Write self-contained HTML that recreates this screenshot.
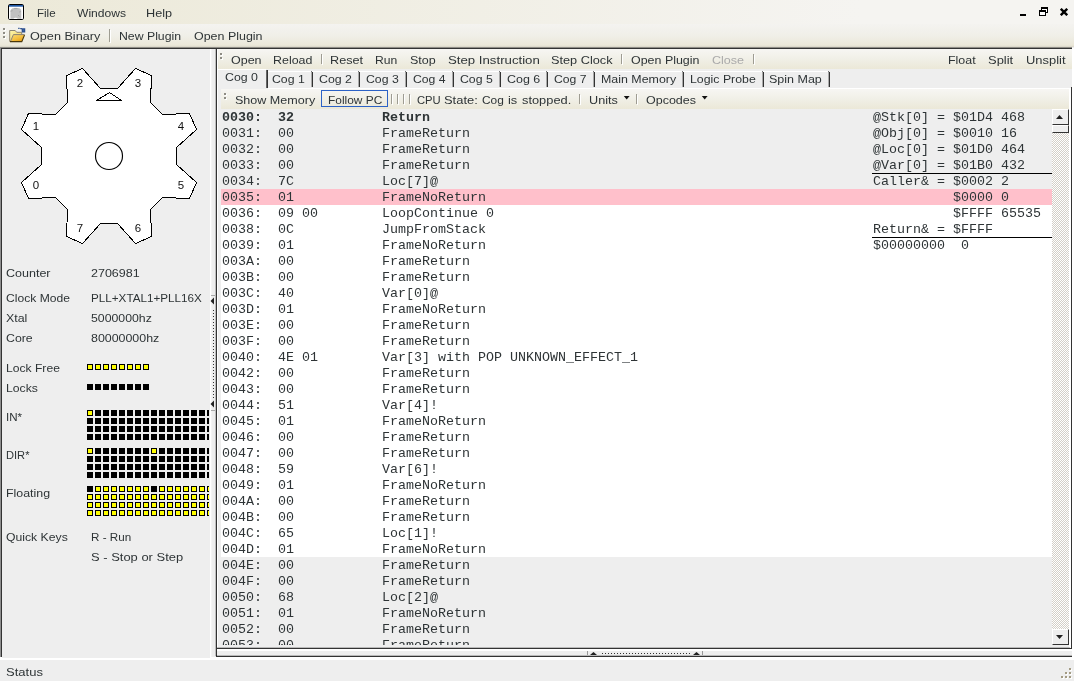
<!DOCTYPE html>
<html><head><meta charset="utf-8"><title>GEAR</title>
<style>
html,body{margin:0;padding:0}
body{width:1074px;height:681px;overflow:hidden;position:relative;background:#eeeeee;font-family:"Liberation Sans",sans-serif;font-size:12px;line-height:16px;color:#2e3436}
div,span,i,b{position:absolute;display:block}
.t{white-space:pre;transform-origin:0 0;font:11.5px/16px "Liberation Sans",sans-serif}
.g{width:20px;text-align:center;transform-origin:50% 50%;color:#111}
#menubar{left:0;top:0;width:1074px;height:24px;background:linear-gradient(90deg,#ece9d8 0,#f5f4f1 860px,#f5f4f1)}
#toolbar{left:0;top:24px;width:1074px;height:23px;background:linear-gradient(#f4f3f0,#f0efe8 50%,#ebe8d9 92%,#d9d6c8)}
.hl{height:1px}.vl{width:1px}
.tb{background:linear-gradient(#f7f6f3,#f1f0e8 45%,#ebe8d8)}
.sep{width:1px;background:#9e9c92;box-shadow:1px 1px 0 #fff}
.grip{width:2px;height:2px;background:#8e8c84;box-shadow:1px 1px 0 #fff}
.lk,.ly{width:6px;height:6px;background:#000;box-sizing:border-box}
.ly{border:1px solid #000;background:#ffff00}
#code{left:221px;top:109px;width:831px;height:536px;overflow:hidden;background:#fff}
.bg{left:0;width:831px}
pre{position:absolute;margin:0;white-space:pre;font:13.333px/16px "Liberation Mono",monospace;color:#2e3436;will-change:transform}
pre b{position:static;display:inline;font-weight:bold}
.ul{left:651px;width:180px;height:1px;background:#000}
.tabsep{width:2px;margin-left:-1px;background:linear-gradient(90deg,#aaa 0 50%,#333 50%);top:72px;height:15px}
.tabsep::before{content:"";position:absolute;left:0;top:-1px;width:1px;height:1px;background:#777}
</style></head><body>
<div id="menubar"></div>
<div id="toolbar"></div>
<!-- app icon -->
<svg style="position:absolute;left:7px;top:3px" width="18" height="18" viewBox="0 0 18 18">
<rect x="0.5" y="0.5" width="17" height="17" rx="2.5" fill="#f6f4ea"/>
<rect x="1.5" y="1.5" width="15" height="15" rx="1.2" fill="#fff" stroke="#000" stroke-width="1"/>
<rect x="2" y="2" width="14" height="1.7" fill="#2058a4"/>
<path d="M3.4 15.8 V8.6 C3.2 6.6 4.6 5 7.2 4.9 H11 C13.4 5 14.5 6.6 14.3 8.6 V15.8 H10.6 C10 14.4 7.2 14.4 6.6 15.8 Z" fill="#c1c1c1"/>
<path d="M3.6 8.2 L5.6 7.7 M12.2 9 L13.8 8.6 M11 12.2 L12.6 13.4 M7.2 5.4 H10.4" stroke="#a2a2a2" stroke-width="0.9" fill="none"/>
</svg>
<!-- window buttons -->
<div style="left:1020px;top:14px;width:6px;height:2px;background:#000"></div>
<svg style="position:absolute;left:1039px;top:7px" width="10" height="10" viewBox="0 0 10 10" shape-rendering="crispEdges">
<rect x="2.5" y="0.5" width="6" height="5" fill="#fff" stroke="#000"/><rect x="2" y="0" width="7" height="2" fill="#000"/>
<rect x="0.5" y="3.5" width="6" height="5" fill="#fff" stroke="#000"/><rect x="0" y="3" width="7" height="2" fill="#000"/>
</svg>
<svg style="position:absolute;left:1060px;top:8px" width="8" height="8" viewBox="0 0 8 8">
<path d="M0.8 0.8 L7.2 7.2 M7.2 0.8 L0.8 7.2" stroke="#000" stroke-width="2.4"/>
</svg>
<!-- main toolbar grip + icon -->
<div class="grip" style="left:3px;top:28px"></div><div class="grip" style="left:3px;top:32px"></div><div class="grip" style="left:3px;top:36px"></div>
<svg style="position:absolute;left:9px;top:27px" width="17" height="16" viewBox="0 0 17 16">
<defs><linearGradient id="fb" x1="0" y1="0" x2="1" y2="1"><stop offset="0" stop-color="#fdf6ae"/><stop offset="1" stop-color="#f3cd52"/></linearGradient>
<linearGradient id="ff" x1="0" y1="0" x2="0.8" y2="1"><stop offset="0" stop-color="#fbdc74"/><stop offset="0.6" stop-color="#f4bd3c"/><stop offset="1" stop-color="#e49a12"/></linearGradient></defs>
<path d="M0.7 14.6 V3.5 H6.2 L7.7 5.3 H12.7 V8 H4.5 L1.9 14.6 Z" fill="url(#fb)"/><path d="M0.7 14.6 V3.5 H6.2 L7.7 5.3 H12.7 V7.6" fill="none" stroke="#8c8373" stroke-width="1" stroke-linejoin="round"/>
<path d="M1.9 14.5 L4.5 7.6 H15.6 L12.8 14.5 Z" fill="url(#ff)"/>
<path d="M1.6 14.2 L4.4 7.6 H15.6" fill="none" stroke="#8c8373" stroke-width="1"/>
<path d="M15.5 8 L12.8 14.6 H1" fill="none" stroke="#4a380c" stroke-width="1.1"/>
<path d="M9.2 1.3 h1.4 M11.2 1.6 h1.6 M13.2 1.9 h2.4 v3 h-2.2 z" stroke="#2c4f8e" stroke-width="1.3" fill="#3d65a8"/>
</svg>
<div class="sep" style="left:109px;top:29px;height:13px"></div>
<!-- line under toolbar -->
<div class="hl" style="left:0;top:47px;width:1072px;background:#8f8d86"></div>
<div class="hl" style="left:1px;top:48px;width:1071px;background:#333"></div>
<!-- left panel -->
<div class="vl" style="left:0;top:47px;height:610px;background:#8f8f8f"></div>
<div class="vl" style="left:1px;top:48px;height:609px;background:#333"></div>
<div style="left:2px;top:49px;width:208px;height:608px;overflow:hidden;background:#eee" id="left">
</div>
<div style="left:210px;top:49px;width:2px;height:608px;background:linear-gradient(90deg,#fff 50%,#f4f4f4 50%)"></div>
<div style="left:0;top:0;width:209px;height:657px;overflow:hidden">
<svg style="position:absolute;left:0;top:0" width="210" height="260" shape-rendering="crispEdges"><polygon points="100.5,88.5 82.5,68.5 66.5,75.5 67.5,102.5 55.5,114.5 28.5,113.5 21.5,129.5 41.5,147.5 41.5,164.5 21.5,182.5 28.5,198.5 55.5,197.5 67.5,209.5 66.5,236.5 82.5,243.5 100.5,223.5 117.5,223.5 135.5,243.5 151.5,236.5 150.5,209.5 162.5,197.5 189.5,198.5 196.5,182.5 176.5,164.5 176.5,147.5 196.5,129.5 189.5,113.5 162.5,114.5 150.5,102.5 151.5,75.5 135.5,68.5 117.5,88.5" fill="#fff" stroke="#000" stroke-width="1"/><polygon points="96.5,100.5 121.5,100.5 109.5,92.5" fill="#fff" stroke="#000" stroke-width="1"/><circle cx="109" cy="156" r="13.5" fill="#fff" stroke="#000" stroke-width="1.15" shape-rendering="auto"/></svg>
<i class="ly" style="left:87px;top:364px"></i><i class="ly" style="left:95px;top:364px"></i><i class="ly" style="left:103px;top:364px"></i><i class="ly" style="left:111px;top:364px"></i><i class="ly" style="left:119px;top:364px"></i><i class="ly" style="left:127px;top:364px"></i><i class="ly" style="left:135px;top:364px"></i><i class="ly" style="left:143px;top:364px"></i><i class="lk" style="left:87px;top:384px"></i><i class="lk" style="left:95px;top:384px"></i><i class="lk" style="left:103px;top:384px"></i><i class="lk" style="left:111px;top:384px"></i><i class="lk" style="left:119px;top:384px"></i><i class="lk" style="left:127px;top:384px"></i><i class="lk" style="left:135px;top:384px"></i><i class="lk" style="left:143px;top:384px"></i><i class="ly" style="left:87px;top:410px"></i><i class="lk" style="left:95px;top:410px"></i><i class="lk" style="left:103px;top:410px"></i><i class="lk" style="left:111px;top:410px"></i><i class="lk" style="left:119px;top:410px"></i><i class="lk" style="left:127px;top:410px"></i><i class="lk" style="left:135px;top:410px"></i><i class="lk" style="left:143px;top:410px"></i><i class="lk" style="left:151px;top:410px"></i><i class="lk" style="left:159px;top:410px"></i><i class="lk" style="left:167px;top:410px"></i><i class="lk" style="left:175px;top:410px"></i><i class="lk" style="left:183px;top:410px"></i><i class="lk" style="left:191px;top:410px"></i><i class="lk" style="left:199px;top:410px"></i><i class="lk" style="left:207px;top:410px"></i><i class="lk" style="left:87px;top:418px"></i><i class="lk" style="left:95px;top:418px"></i><i class="lk" style="left:103px;top:418px"></i><i class="lk" style="left:111px;top:418px"></i><i class="lk" style="left:119px;top:418px"></i><i class="lk" style="left:127px;top:418px"></i><i class="lk" style="left:135px;top:418px"></i><i class="lk" style="left:143px;top:418px"></i><i class="lk" style="left:151px;top:418px"></i><i class="lk" style="left:159px;top:418px"></i><i class="lk" style="left:167px;top:418px"></i><i class="lk" style="left:175px;top:418px"></i><i class="lk" style="left:183px;top:418px"></i><i class="lk" style="left:191px;top:418px"></i><i class="lk" style="left:199px;top:418px"></i><i class="lk" style="left:207px;top:418px"></i><i class="lk" style="left:87px;top:426px"></i><i class="lk" style="left:95px;top:426px"></i><i class="lk" style="left:103px;top:426px"></i><i class="lk" style="left:111px;top:426px"></i><i class="lk" style="left:119px;top:426px"></i><i class="lk" style="left:127px;top:426px"></i><i class="lk" style="left:135px;top:426px"></i><i class="lk" style="left:143px;top:426px"></i><i class="lk" style="left:151px;top:426px"></i><i class="lk" style="left:159px;top:426px"></i><i class="lk" style="left:167px;top:426px"></i><i class="lk" style="left:175px;top:426px"></i><i class="lk" style="left:183px;top:426px"></i><i class="lk" style="left:191px;top:426px"></i><i class="lk" style="left:199px;top:426px"></i><i class="lk" style="left:207px;top:426px"></i><i class="lk" style="left:87px;top:434px"></i><i class="lk" style="left:95px;top:434px"></i><i class="lk" style="left:103px;top:434px"></i><i class="lk" style="left:111px;top:434px"></i><i class="lk" style="left:119px;top:434px"></i><i class="lk" style="left:127px;top:434px"></i><i class="lk" style="left:135px;top:434px"></i><i class="lk" style="left:143px;top:434px"></i><i class="lk" style="left:151px;top:434px"></i><i class="lk" style="left:159px;top:434px"></i><i class="lk" style="left:167px;top:434px"></i><i class="lk" style="left:175px;top:434px"></i><i class="lk" style="left:183px;top:434px"></i><i class="lk" style="left:191px;top:434px"></i><i class="lk" style="left:199px;top:434px"></i><i class="lk" style="left:207px;top:434px"></i><i class="ly" style="left:87px;top:448px"></i><i class="lk" style="left:95px;top:448px"></i><i class="lk" style="left:103px;top:448px"></i><i class="lk" style="left:111px;top:448px"></i><i class="lk" style="left:119px;top:448px"></i><i class="lk" style="left:127px;top:448px"></i><i class="lk" style="left:135px;top:448px"></i><i class="lk" style="left:143px;top:448px"></i><i class="ly" style="left:151px;top:448px"></i><i class="lk" style="left:159px;top:448px"></i><i class="lk" style="left:167px;top:448px"></i><i class="lk" style="left:175px;top:448px"></i><i class="lk" style="left:183px;top:448px"></i><i class="lk" style="left:191px;top:448px"></i><i class="lk" style="left:199px;top:448px"></i><i class="lk" style="left:207px;top:448px"></i><i class="lk" style="left:87px;top:456px"></i><i class="lk" style="left:95px;top:456px"></i><i class="lk" style="left:103px;top:456px"></i><i class="lk" style="left:111px;top:456px"></i><i class="lk" style="left:119px;top:456px"></i><i class="lk" style="left:127px;top:456px"></i><i class="lk" style="left:135px;top:456px"></i><i class="lk" style="left:143px;top:456px"></i><i class="lk" style="left:151px;top:456px"></i><i class="lk" style="left:159px;top:456px"></i><i class="lk" style="left:167px;top:456px"></i><i class="lk" style="left:175px;top:456px"></i><i class="lk" style="left:183px;top:456px"></i><i class="lk" style="left:191px;top:456px"></i><i class="lk" style="left:199px;top:456px"></i><i class="lk" style="left:207px;top:456px"></i><i class="lk" style="left:87px;top:464px"></i><i class="lk" style="left:95px;top:464px"></i><i class="lk" style="left:103px;top:464px"></i><i class="lk" style="left:111px;top:464px"></i><i class="lk" style="left:119px;top:464px"></i><i class="lk" style="left:127px;top:464px"></i><i class="lk" style="left:135px;top:464px"></i><i class="lk" style="left:143px;top:464px"></i><i class="lk" style="left:151px;top:464px"></i><i class="lk" style="left:159px;top:464px"></i><i class="lk" style="left:167px;top:464px"></i><i class="lk" style="left:175px;top:464px"></i><i class="lk" style="left:183px;top:464px"></i><i class="lk" style="left:191px;top:464px"></i><i class="lk" style="left:199px;top:464px"></i><i class="lk" style="left:207px;top:464px"></i><i class="lk" style="left:87px;top:472px"></i><i class="lk" style="left:95px;top:472px"></i><i class="lk" style="left:103px;top:472px"></i><i class="lk" style="left:111px;top:472px"></i><i class="lk" style="left:119px;top:472px"></i><i class="lk" style="left:127px;top:472px"></i><i class="lk" style="left:135px;top:472px"></i><i class="lk" style="left:143px;top:472px"></i><i class="lk" style="left:151px;top:472px"></i><i class="lk" style="left:159px;top:472px"></i><i class="lk" style="left:167px;top:472px"></i><i class="lk" style="left:175px;top:472px"></i><i class="lk" style="left:183px;top:472px"></i><i class="lk" style="left:191px;top:472px"></i><i class="lk" style="left:199px;top:472px"></i><i class="lk" style="left:207px;top:472px"></i><i class="lk" style="left:87px;top:486px"></i><i class="ly" style="left:95px;top:486px"></i><i class="ly" style="left:103px;top:486px"></i><i class="ly" style="left:111px;top:486px"></i><i class="ly" style="left:119px;top:486px"></i><i class="ly" style="left:127px;top:486px"></i><i class="ly" style="left:135px;top:486px"></i><i class="ly" style="left:143px;top:486px"></i><i class="lk" style="left:151px;top:486px"></i><i class="ly" style="left:159px;top:486px"></i><i class="ly" style="left:167px;top:486px"></i><i class="ly" style="left:175px;top:486px"></i><i class="ly" style="left:183px;top:486px"></i><i class="ly" style="left:191px;top:486px"></i><i class="ly" style="left:199px;top:486px"></i><i class="ly" style="left:207px;top:486px"></i><i class="ly" style="left:87px;top:494px"></i><i class="ly" style="left:95px;top:494px"></i><i class="ly" style="left:103px;top:494px"></i><i class="ly" style="left:111px;top:494px"></i><i class="ly" style="left:119px;top:494px"></i><i class="ly" style="left:127px;top:494px"></i><i class="ly" style="left:135px;top:494px"></i><i class="ly" style="left:143px;top:494px"></i><i class="ly" style="left:151px;top:494px"></i><i class="ly" style="left:159px;top:494px"></i><i class="ly" style="left:167px;top:494px"></i><i class="ly" style="left:175px;top:494px"></i><i class="ly" style="left:183px;top:494px"></i><i class="ly" style="left:191px;top:494px"></i><i class="ly" style="left:199px;top:494px"></i><i class="ly" style="left:207px;top:494px"></i><i class="ly" style="left:87px;top:502px"></i><i class="ly" style="left:95px;top:502px"></i><i class="ly" style="left:103px;top:502px"></i><i class="ly" style="left:111px;top:502px"></i><i class="ly" style="left:119px;top:502px"></i><i class="ly" style="left:127px;top:502px"></i><i class="ly" style="left:135px;top:502px"></i><i class="ly" style="left:143px;top:502px"></i><i class="ly" style="left:151px;top:502px"></i><i class="ly" style="left:159px;top:502px"></i><i class="ly" style="left:167px;top:502px"></i><i class="ly" style="left:175px;top:502px"></i><i class="ly" style="left:183px;top:502px"></i><i class="ly" style="left:191px;top:502px"></i><i class="ly" style="left:199px;top:502px"></i><i class="ly" style="left:207px;top:502px"></i><i class="ly" style="left:87px;top:510px"></i><i class="ly" style="left:95px;top:510px"></i><i class="ly" style="left:103px;top:510px"></i><i class="ly" style="left:111px;top:510px"></i><i class="ly" style="left:119px;top:510px"></i><i class="ly" style="left:127px;top:510px"></i><i class="ly" style="left:135px;top:510px"></i><i class="ly" style="left:143px;top:510px"></i><i class="ly" style="left:151px;top:510px"></i><i class="ly" style="left:159px;top:510px"></i><i class="ly" style="left:167px;top:510px"></i><i class="ly" style="left:175px;top:510px"></i><i class="ly" style="left:183px;top:510px"></i><i class="ly" style="left:191px;top:510px"></i><i class="ly" style="left:199px;top:510px"></i><i class="ly" style="left:207px;top:510px"></i>
</div>
<!-- vertical divider handle -->
<div class="hl" style="left:211px;top:295px;width:4px;background:#aaa"></div>
<div class="hl" style="left:211px;top:410px;width:4px;background:#aaa"></div>
<svg style="position:absolute;left:210px;top:297px" width="5" height="8" viewBox="0 0 5 8"><path d="M4 0.5 L0.5 4 L4 7.5 Z" fill="#222"/></svg>
<svg style="position:absolute;left:210px;top:400px" width="5" height="8" viewBox="0 0 5 8"><path d="M4 0.5 L0.5 4 L4 7.5 Z" fill="#222"/></svg>
<div style="left:213px;top:310px;width:1px;height:89px;background:repeating-linear-gradient(#333 0 1px,transparent 1px 3px)"></div>
<!-- right panel frame -->
<div class="vl" style="left:215px;top:49px;height:607px;background:#bdbdbd"></div><div class="vl" style="left:216px;top:49px;height:608px;background:#333"></div>
<div class="vl" style="left:217px;top:49px;height:599px;background:#fff"></div>
<div class="tb" style="left:218px;top:49px;width:854px;height:20px"></div>
<div style="left:1072px;top:48px;width:2px;height:612px;background:#fff"></div>
<div class="grip" style="left:220px;top:53px"></div><div class="grip" style="left:220px;top:57px"></div>
<div class="sep" style="left:321px;top:54px;height:10px"></div>
<div class="sep" style="left:621px;top:54px;height:10px"></div>
<div class="sep" style="left:753px;top:54px;height:10px"></div>
<!-- tabs -->
<div class="hl" style="left:218px;top:69px;width:48px;background:#fff"></div>
<div style="left:266px;top:70px;width:2px;height:18px;background:linear-gradient(90deg,#999,#333 50%)"></div>
<div class="hl" style="left:268px;top:71px;width:561px;background:#fff"></div>
<div class="tabsep" style="left:312px"></div><div class="tabsep" style="left:359px"></div><div class="tabsep" style="left:406px"></div><div class="tabsep" style="left:453px"></div><div class="tabsep" style="left:500px"></div><div class="tabsep" style="left:547px"></div><div class="tabsep" style="left:594px"></div><div class="tabsep" style="left:683px"></div><div class="tabsep" style="left:763px"></div><div class="tabsep" style="left:829px"></div>
<div class="hl" style="left:268px;top:88px;width:803px;background:#fff"></div>
<div class="vl" style="left:1071px;top:87px;height:562px;background:#333"></div>
<div style="left:1069px;top:89px;width:2px;height:559px;background:#fff"></div>
<!-- second toolbar -->
<div class="tb" style="left:221px;top:89px;width:848px;height:20px"></div>
<div class="grip" style="left:224px;top:93px"></div><div class="grip" style="left:224px;top:97px"></div>
<div style="left:321px;top:90px;width:67px;height:17px;box-sizing:border-box;border:1px solid #2c62c6"></div>
<div class="sep" style="left:391px;top:94px;height:10px"></div><div class="sep" style="left:397px;top:94px;height:10px"></div><div class="sep" style="left:403px;top:94px;height:10px"></div><div class="sep" style="left:409px;top:94px;height:10px"></div>
<div class="sep" style="left:579px;top:94px;height:10px"></div><div class="sep" style="left:636px;top:94px;height:10px"></div>
<svg style="position:absolute;left:623px;top:96px" width="8" height="4"><path d="M0.8 0 H6.6 L3.7 3.5 Z" fill="#111"/></svg>
<svg style="position:absolute;left:701px;top:96px" width="8" height="4"><path d="M0.8 0 H6.6 L3.7 3.5 Z" fill="#111"/></svg>
<!-- code -->
<div id="code">
<div class="bg" style="top:0;height:80px;background:#eee"></div><div class="bg" style="top:80px;height:16px;background:#ffc0cb"></div><div class="bg" style="top:448px;height:100px;background:#eee"></div>
<pre style="left:1px;top:1px"><b>0030:  32           Return</b>
0031:  00           FrameReturn
0032:  00           FrameReturn
0033:  00           FrameReturn
0034:  7C           Loc[7]@
0035:  01           FrameNoReturn
0036:  09 00        LoopContinue 0
0038:  0C           JumpFromStack
0039:  01           FrameNoReturn
003A:  00           FrameReturn
003B:  00           FrameReturn
003C:  40           Var[0]@
003D:  01           FrameNoReturn
003E:  00           FrameReturn
003F:  00           FrameReturn
0040:  4E 01        Var[3] with POP UNKNOWN_EFFECT_1
0042:  00           FrameReturn
0043:  00           FrameReturn
0044:  51           Var[4]!
0045:  01           FrameNoReturn
0046:  00           FrameReturn
0047:  00           FrameReturn
0048:  59           Var[6]!
0049:  01           FrameNoReturn
004A:  00           FrameReturn
004B:  00           FrameReturn
004C:  65           Loc[1]!
004D:  01           FrameNoReturn
004E:  00           FrameReturn
004F:  00           FrameReturn
0050:  68           Loc[2]@
0051:  01           FrameNoReturn
0052:  00           FrameReturn
0053:  00           FrameReturn</pre>
<pre style="left:652px;top:1px">@Stk[0] = $01D4 468
@Obj[0] = $0010 16
@Loc[0] = $01D0 464
@Var[0] = $01B0 432
Caller&amp; = $0002 2
          $0000 0
          $FFFF 65535
Return&amp; = $FFFF
$00000000  0</pre>
<div class="ul" style="top:64px"></div><div class="ul" style="top:128px"></div>
</div>
<!-- scrollbar -->
<div style="left:1052px;top:109px;width:17px;height:536px;background:#d9d7cf;background-image:conic-gradient(#fff 25%,#d4d0c8 0 50%,#fff 0 75%,#d4d0c8 0);background-size:2px 2px"></div>
<div style="left:1052px;top:109px;width:17px;height:16px;background:#eee;box-sizing:border-box;border-left:1px solid #fff;border-top:1px solid #fff;border-right:1px solid #333;border-bottom:1px solid #333"></div>
<svg style="position:absolute;left:1056px;top:115px" width="7" height="4"><path d="M0 4 H7 L3.5 0 Z" fill="#222"/></svg>
<div style="left:1052px;top:125px;width:17px;height:8px;background:#eee;box-sizing:border-box;border-left:1px solid #fff;border-top:1px solid #fff;border-right:1px solid #333;border-bottom:1px solid #333"></div>
<div style="left:1052px;top:629px;width:17px;height:16px;background:#eee;box-sizing:border-box;border-left:1px solid #fff;border-top:1px solid #fff;border-right:1px solid #333;border-bottom:1px solid #333"></div>
<svg style="position:absolute;left:1056px;top:635px" width="7" height="4"><path d="M0 0 H7 L3.5 4 Z" fill="#222"/></svg>
<!-- bottom -->
<div class="hl" style="left:217px;top:647px;width:853px;background:rgba(0,0,0,0.22)"></div><div class="hl" style="left:216px;top:648px;width:856px;background:#333"></div>
<div style="left:217px;top:649px;width:855px;height:2px;background:#fff"></div>
<div class="hl" style="left:216px;top:655px;width:856px;background:rgba(0,0,0,0.22)"></div><div class="hl" style="left:216px;top:656px;width:856px;background:#333"></div>
<div style="left:0;top:657px;width:1074px;height:3px;background:#fff"></div><div style="left:2px;top:657px;width:208px;height:1px;background:#eee"></div>
<div style="left:0;top:660px;width:1074px;height:21px;background:#eee"></div>
<!-- horizontal divider handle -->
<div class="vl" style="left:587px;top:651px;height:4px;background:#999"></div>
<div class="vl" style="left:702px;top:651px;height:4px;background:#999"></div>
<svg style="position:absolute;left:590px;top:652px" width="7" height="3"><path d="M0 3 H7 L3.5 0 Z" fill="#222"/></svg>
<svg style="position:absolute;left:693px;top:652px" width="7" height="3"><path d="M0 3 H7 L3.5 0 Z" fill="#222"/></svg>
<div style="left:602px;top:653px;width:89px;height:1px;background:repeating-linear-gradient(90deg,#333 0 1px,transparent 1px 3px)"></div>
<!-- resize grip -->
<div class="grip" style="left:1069px;top:668px;background:#a39b84"></div>
<div class="grip" style="left:1065px;top:672px;background:#a39b84"></div><div class="grip" style="left:1069px;top:672px;background:#a39b84"></div>
<div class="grip" style="left:1061px;top:676px;background:#a39b84"></div><div class="grip" style="left:1065px;top:676px;background:#a39b84"></div><div class="grip" style="left:1069px;top:676px;background:#a39b84"></div>
<div id="txt" style="left:0;top:0;width:1074px;height:681px;will-change:transform">
<span class="t" style="left:37px;top:5px;transform:scaleX(1.0045)">File</span>
<span class="t" style="left:77px;top:5px;transform:scaleX(1.0507)">Windows</span>
<span class="t" style="left:146px;top:5px;transform:scaleX(1.1036)">Help</span>
<span class="t" style="left:30px;top:28px;transform:scaleX(1.0985)">Open Binary</span>
<span class="t" style="left:119px;top:28px;transform:scaleX(1.0672)">New Plugin</span>
<span class="t" style="left:194px;top:28px;transform:scaleX(1.0827)">Open Plugin</span>
<span class="t" style="left:231px;top:52px;transform:scaleX(1.0865)">Open</span>
<span class="t" style="left:273px;top:52px;transform:scaleX(1.0804)">Reload</span>
<span class="t" style="left:330px;top:52px;transform:scaleX(1.1016)">Reset</span>
<span class="t" style="left:375px;top:52px;transform:scaleX(1.0558)">Run</span>
<span class="t" style="left:410px;top:52px;transform:scaleX(1.0881)">Stop</span>
<span class="t" style="left:448px;top:52px;transform:scaleX(1.1489)">Step Instruction</span>
<span class="t" style="left:551px;top:52px;transform:scaleX(1.1060)">Step Clock</span>
<span class="t" style="left:631px;top:52px;transform:scaleX(1.0815)">Open Plugin</span>
<span class="t" style="left:712px;top:52px;transform:scaleX(1.0905);color:#aaa">Close</span>
<span class="t" style="left:948px;top:52px;transform:scaleX(1.0817)">Float</span>
<span class="t" style="left:988px;top:52px;transform:scaleX(1.1259)">Split</span>
<span class="t" style="left:1026px;top:52px;transform:scaleX(1.1227)">Unsplit</span>
<span class="t" style="left:225px;top:69px;transform:scaleX(1.0739)">Cog 0</span>
<span class="t" style="left:272px;top:71px;transform:scaleX(1.0682)">Cog 1</span>
<span class="t" style="left:319px;top:71px;transform:scaleX(1.0752)">Cog 2</span>
<span class="t" style="left:366px;top:71px;transform:scaleX(1.0679)">Cog 3</span>
<span class="t" style="left:413px;top:71px;transform:scaleX(1.0609)">Cog 4</span>
<span class="t" style="left:460px;top:71px;transform:scaleX(1.0675)">Cog 5</span>
<span class="t" style="left:507px;top:71px;transform:scaleX(1.0817)">Cog 6</span>
<span class="t" style="left:554px;top:71px;transform:scaleX(1.0585)">Cog 7</span>
<span class="t" style="left:601px;top:71px;transform:scaleX(1.0786)">Main Memory</span>
<span class="t" style="left:690px;top:71px;transform:scaleX(1.0717)">Logic Probe</span>
<span class="t" style="left:769px;top:71px;transform:scaleX(1.0865)">Spin Map</span>
<span class="t" style="left:235px;top:92px;transform:scaleX(1.0908)">Show Memory</span>
<span class="t" style="left:328px;top:92px;transform:scaleX(1.0363)">Follow PC</span>
<span class="t" style="left:417px;top:92px;transform:scaleX(0.9757)">CPU</span>
<span class="t" style="left:444px;top:92px;transform:scaleX(1.1238)">State:</span>
<span class="t" style="left:482px;top:92px;transform:scaleX(1.0352)">Cog</span>
<span class="t" style="left:508px;top:92px;transform:scaleX(1.1139)">is</span>
<span class="t" style="left:522px;top:92px;transform:scaleX(1.1160)">stopped.</span>
<span class="t" style="left:589px;top:92px;transform:scaleX(1.0994)">Units</span>
<span class="t" style="left:646px;top:92px;transform:scaleX(1.0866)">Opcodes</span>
<span class="t" style="left:6px;top:265px;transform:scaleX(1.0884)">Counter</span>
<span class="t" style="left:91px;top:265px;transform:scaleX(1.0878)">2706981</span>
<span class="t" style="left:6px;top:290px;transform:scaleX(1.0527)">Clock Mode</span>
<span class="t" style="left:91px;top:290px;transform:scaleX(1.0154)">PLL+XTAL1+PLL16X</span>
<span class="t" style="left:6px;top:310px;transform:scaleX(1.0778)">Xtal</span>
<span class="t" style="left:91px;top:310px;transform:scaleX(1.0690)">5000000hz</span>
<span class="t" style="left:6px;top:330px;transform:scaleX(1.0722)">Core</span>
<span class="t" style="left:91px;top:330px;transform:scaleX(1.0778)">80000000hz</span>
<span class="t" style="left:6px;top:360px;transform:scaleX(1.0539)">Lock Free</span>
<span class="t" style="left:6px;top:380px;transform:scaleX(1.0608)">Locks</span>
<span class="t" style="left:6px;top:409px;transform:scaleX(1.0035)">IN*</span>
<span class="t" style="left:6px;top:447px;transform:scaleX(0.9667)">DIR*</span>
<span class="t" style="left:6px;top:485px;transform:scaleX(1.0775)">Floating</span>
<span class="t" style="left:6px;top:529px;transform:scaleX(1.0621)">Quick Keys</span>
<span class="t" style="left:91px;top:529px;transform:scaleX(1.0125)">R - Run</span>
<span class="t" style="left:91px;top:549px;transform:scaleX(1.1261)">S - Stop or Step</span>
<span class="t" style="left:6px;top:664px;transform:scaleX(1.1317)">Status</span>
<span class="t g" style="left:70px;top:75px">2</span><span class="t g" style="left:128px;top:75px">3</span><span class="t g" style="left:26px;top:118px">1</span><span class="t g" style="left:171px;top:118px">4</span><span class="t g" style="left:26px;top:177px">0</span><span class="t g" style="left:171px;top:177px">5</span><span class="t g" style="left:70px;top:220px">7</span><span class="t g" style="left:128px;top:220px">6</span>
</div>
</body></html>
